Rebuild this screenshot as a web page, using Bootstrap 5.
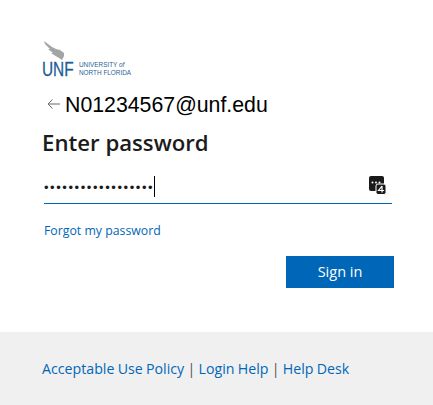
<!DOCTYPE html>
<html lang="en">
<head>
  <meta charset="UTF-8">
  <meta name="viewport" content="width=device-width, initial-scale=1">
  <title>Sign in | UNF</title>
  <link href="https://cdn.jsdelivr.net/npm/bootstrap@5.3.3/dist/css/bootstrap.min.css" rel="stylesheet">
  <style>
    body {
      background: #fff;
      font-family: "Open Sans", "Noto Sans", sans-serif;
      color: #1b1b1b;
      overflow: hidden;
    }
    a { color: #0067b8; text-decoration: none; }
    .login-box { height: 332px; padding: 40px 39px 0 42px; }
    .logo-wrap { height: 40px; }
    .logo-uni {
      font-family: "Liberation Sans", sans-serif;
      font-size: 6.4px;
      fill: #2b5f96;
    }
    .logo-unf {
      font-family: "Liberation Sans", sans-serif;
      font-size: 20px;
      fill: #1f5c99;
      stroke: #1f5c99;
      stroke-width: .3px;
    }
    .user-row { height: 28px; margin-top: 11px; }
    .back-arrow { width: 16px; height: 12px; margin: -3px 3px 0 4px; }
    .user-name {
      font-family: "Liberation Sans", sans-serif;
      font-size: 21.3px;
      line-height: 28px;
      color: #000;
    }
    .page-title {
      font-size: 22.2px;
      font-weight: 600;
      line-height: 32px;
      margin: 8px 0 0 0;
    }
    .pw-field {
      height: 32px;
      margin: 13px 0 0 2px;
      width: 348px;
      border-bottom: 1px solid #0067b8;
    }
    .pw-dots {
      font-family: "Liberation Sans", sans-serif;
      font-size: 13px;
      line-height: 22px;
      letter-spacing: 1.57px;
      color: #1b1b1b;
    }
    .pw-icon { margin: -3px 5px 0 0; }
    .pw-caret { width: 1px; height: 21px; background: #000; margin: -3px 0 0 0; }
    .forgot-link { font-size: 12.3px; line-height: 16px; margin: 19px 0 0 2px; display: block; }
    .signin-btn {
      width: 108px;
      height: 32px;
      background: #0067b8;
      border: 0;
      border-radius: 0;
      color: #fff;
      font-size: 14.5px;
      padding: 0;
    }
    .signin-btn:hover { background: #005a9e; color: #fff; }
    .btn-row { margin-top: 17px; }
    .page-foot {
      background: #f0f0f0;
      height: 73px;
      padding: 27px 42px 0;
      font-size: 14.2px;
      word-spacing: -.4px;
      line-height: 20px;
      color: #555;
    }
  </style>
</head>
<body>

  <div class="login-box">
    <div class="logo-wrap">
      <svg width="92" height="40" viewBox="0 0 92 40">
        <!-- bird, drawn by eye -->
        <path d="M2 1 10 7 14 9 18 10 22 13 22 16 20 20 17 18 12 15 9 13 11 13 6 9 8 9 3 4Z" fill="#a2a4a6"/>
        <text class="logo-unf" transform="translate(0 36) scale(.77 1)">UNF</text>
        <text class="logo-uni" x="37" y="27">UNIVERSITY <tspan font-style="italic">of</tspan></text>
        <text class="logo-uni" x="37" y="35">NORTH FLORIDA</text>
      </svg>
    </div>

    <div class="user-row d-flex align-items-center">
      <svg class="back-arrow" viewBox="0 0 16 12">
        <path d="M14 6H2M6.5 1.5L2 6l4.5 4.5" fill="none" stroke="#6b6b6b" stroke-width="1"/>
      </svg>
      <span class="user-name">N01234567@unf.edu</span>
    </div>

    <h1 class="page-title">Enter password</h1>

    <div class="pw-field d-flex align-items-center justify-content-between">
      <div class="d-flex align-items-center">
        <span class="pw-dots">••••••••••••••••••</span>
        <span class="pw-caret"></span>
      </div>
      <svg width="18" height="20" viewBox="0 0 18 20" class="pw-icon">
        <rect x="0" y="0" width="15" height="15" rx="2" fill="#1a1a1a"/>
        <circle cx="3.500" cy="6.500" r="1" fill="#fff"/>
        <circle cx="7" cy="6.500" r="1" fill="#fff"/>
        <circle cx="10.500" cy="6.500" r="1" fill="#fff"/>
        <rect x="7" y="8" width="10" height="10.500" rx="2" fill="#1a1a1a" stroke="#fff"/>
        <path d="M13 10v6.500M13 10l-3.500 4.500H15" fill="none" stroke="#fff" stroke-width="1.200"/>
      </svg>
    </div>

    <a class="forgot-link" href="#">Forgot my password</a>

    <div class="btn-row d-flex justify-content-end">
      <button type="button" class="btn signin-btn">Sign in</button>
    </div>
  </div>

  <div class="page-foot">
    <a href="#">Acceptable Use Policy</a> | <a href="#">Login Help</a> | <a href="#">Help Desk</a>
  </div>

  <script src="https://cdn.jsdelivr.net/npm/bootstrap@5.3.3/dist/js/bootstrap.bundle.min.js"></script>
</body>
</html>
